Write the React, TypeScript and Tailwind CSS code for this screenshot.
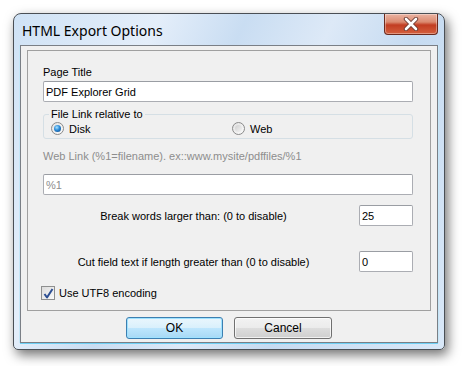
function Radio({ checked }: { checked?: boolean }) {
  return (
    <span className="relative inline-flex size-[13px] items-center justify-center rounded-full border border-[#8a8a8a] bg-gradient-to-br from-[#e2e2e2] to-[#fbfbfb]">
      {checked ? (
        <span className="size-[7px] rounded-full bg-[radial-gradient(circle_at_40%_35%,#a9e4ff_0%,#2a8ad8_45%,#0b3f7a_100%)]" />
      ) : (
        <span className="size-[7px] rounded-full bg-gradient-to-br from-[#d0d0d0] to-[#f4f4f4]" />
      )}
    </span>
  )
}

function TextBox({ value, gray, className = '' }: { value: string; gray?: boolean; className?: string }) {
  return (
    <div
      className={`flex h-[21px] items-center rounded-[2px] border border-[#abadb3] border-t-[#9a9da3] bg-white px-[2px] ${gray ? 'text-[#8d8d8d]' : 'text-black'} ${className}`}
    >
      {value}
    </div>
  )
}

function CloseButton() {
  return (
    <div className="flex h-[21px] w-[54px] items-center justify-center rounded-b-[4px] border border-t-0 border-[#6b2a1e] bg-[linear-gradient(to_bottom,#eab3a2_0%,#db8a70_40%,#c23d22_55%,#d4603e_100%)] shadow-[inset_0_0_0_1px_rgba(255,255,255,0.35)]">
      <svg width="16" height="14" viewBox="0 0 16 14">
        <path d="M3 2 L13 12 M13 2 L3 12" stroke="#6a3a32" strokeWidth="4.4" strokeLinecap="round" />
        <path d="M3 2 L13 12 M13 2 L3 12" stroke="#ffffff" strokeWidth="2.6" strokeLinecap="round" />
      </svg>
    </div>
  )
}

export default function App() {
  return (
    <div className="h-[366px] w-[462px] bg-white pl-[13px] pt-[13px] font-['Liberation_Sans',Arial,sans-serif] text-[11px] text-black">
      {/* окно Vista */}
      <div className="flex h-[337px] w-[432px] flex-col rounded-t-[8px] rounded-b-[5px] border border-[#4a4f55] bg-[linear-gradient(115deg,#cfe2f5_0%,#e4eefa_25%,#c9ddf2_40%,#dde9f7_55%,#c6dbf1_70%,#d9e8f8_100%)] shadow-[3px_5px_12px_rgba(0,0,0,0.55)]">
        <div className="flex h-[31px] shrink-0 items-start justify-between pl-[8px] pr-[6px]">
          <div className="pt-[7px] font-['Noto_Sans',sans-serif] text-[14px] leading-[20px] text-black">
            HTML Export Options
          </div>
          <CloseButton />
        </div>

        <div className="mx-[6px] mb-[6px] flex flex-1 flex-col border border-[#7a7f86] bg-[#f0f0f0] px-[6px] pt-[4px] shadow-[0_1px_0_#6fd0f4,1px_0_0_#c5e6f7,-1px_0_0_#c5e6f7]">
          <div className="flex flex-col border border-[#a0a0a0] pl-[15px] pr-[17px] pt-[14px] pb-[10px] leading-[14px]">
            <div className="h-[14px]">Page Title</div>
            <TextBox value="PDF Explorer Grid" className="mt-[2px]" />

            <div className="relative mt-[12px] flex h-[25px] items-center rounded-[3px] border border-[#d5dfe5] pl-[7px] pt-[4px]">
              <div className="absolute -top-[8px] left-[5px] bg-[#f0f0f0] px-[2px] leading-[14px]">
                File Link relative to
              </div>
              <label className="flex w-[181px] items-center gap-[5px]">
                <Radio checked />
                Disk
              </label>
              <label className="flex items-center gap-[5px]">
                <Radio />
                Web
              </label>
            </div>

            <div className="mt-[10px] h-[14px] text-[#8d8d8d]">Web Link (%1=filename). ex::www.mysite/pdffiles/%1</div>
            <TextBox value="%1" gray className="mt-[11px]" />

            <div className="mt-[10px] flex items-center">
              <div className="w-[301px] text-center">Break words larger than: (0 to disable)</div>
              <TextBox value="25" className="ml-auto w-[54px]" />
            </div>

            <div className="mt-[25px] flex items-center">
              <div className="w-[301px] text-center">Cut field text if length greater than (0 to disable)</div>
              <TextBox value="0" className="ml-auto w-[54px]" />
            </div>

            <label className="-ml-[2px] mt-[14px] flex h-[14px] items-center gap-[4px]">
              <span className="flex size-[14px] items-center justify-center border border-[#8e8f8f] bg-gradient-to-br from-[#dcdcdc] to-[#fafafa]">
                <svg width="11" height="11" viewBox="0 0 11 11">
                  <path d="M1.5 6 L4 9.5 L9.5 1" stroke="#2d4f93" strokeWidth="2" fill="none" strokeLinejoin="round" />
                </svg>
              </span>
              Use UTF8 encoding
            </label>
          </div>

          <div className="mt-[6px] flex justify-center gap-[11px] text-[12px]">
            <button className="h-[22px] w-[97px] rounded-[3px] border border-[#3c7fb1] bg-[linear-gradient(to_bottom,#eaf6fd_0%,#d9f0fc_50%,#bee6fd_51%,#a7d9f5_100%)] shadow-[inset_0_0_0_1px_#9fe2ff]">
              OK
            </button>
            <button className="h-[22px] w-[98px] rounded-[3px] border border-[#707070] bg-[linear-gradient(to_bottom,#f2f2f2_0%,#ebebeb_50%,#dddddd_51%,#cfcfcf_100%)] shadow-[inset_0_0_0_1px_rgba(255,255,255,0.7)]">
              Cancel
            </button>
          </div>
        </div>
      </div>
    </div>
  )
}
